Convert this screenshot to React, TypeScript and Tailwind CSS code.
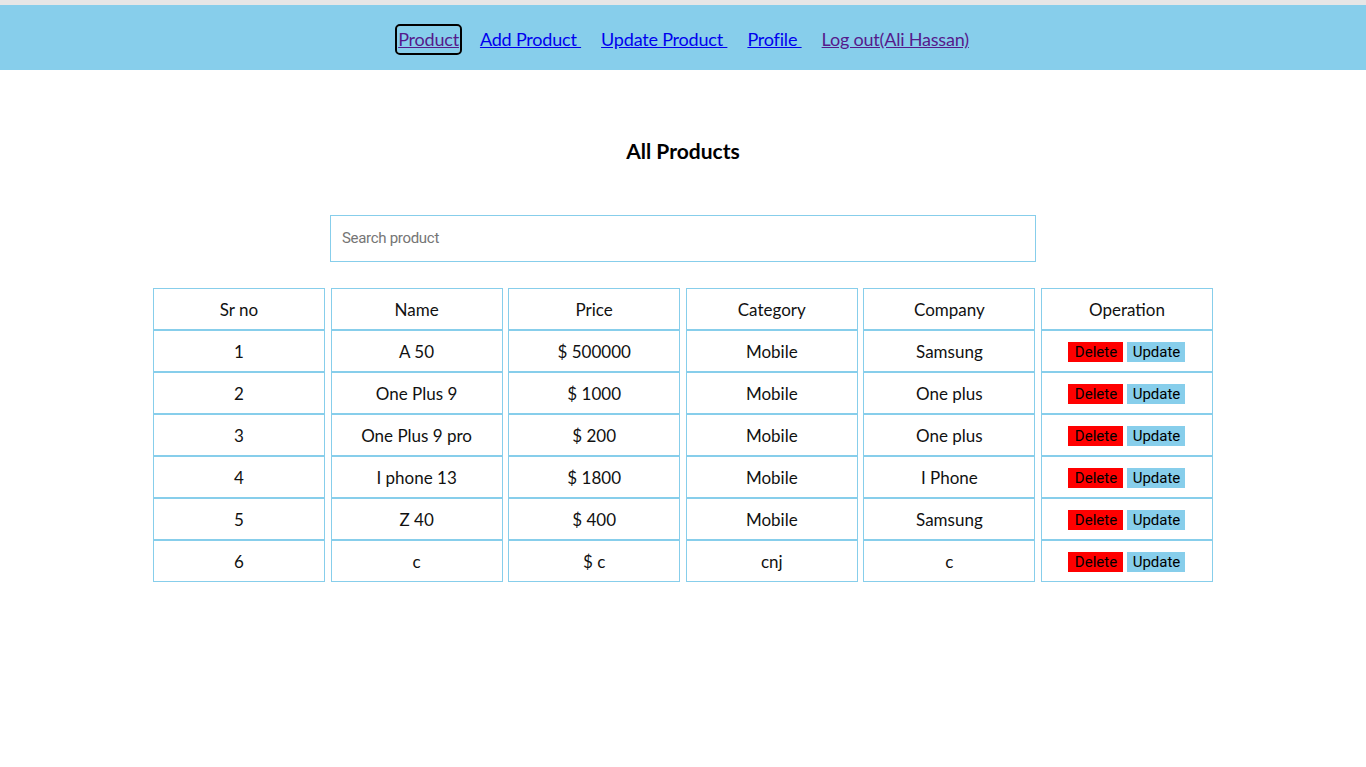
import React from "react";

const products = [
  { name: "A 50", price: "500000", category: "Mobile", company: "Samsung" },
  { name: "One Plus 9", price: "1000", category: "Mobile", company: "One plus" },
  { name: "One Plus 9 pro", price: "200", category: "Mobile", company: "One plus" },
  { name: "I phone 13", price: "1800", category: "Mobile", company: "I Phone" },
  { name: "Z 40", price: "400", category: "Mobile", company: "Samsung" },
  { name: "c", price: "c", category: "cnj", company: "c" },
];

const headers = ["Sr no", "Name", "Price", "Category", "Company", "Operation"];

function Cell({ children }: { children: React.ReactNode }) {
  return (
    <div className="h-[42px] border border-[#87ceeb] flex items-center justify-center pt-[2px] text-[17px] text-[#111]">
      {children}
    </div>
  );
}

export default function App() {
  return (
    <div className="min-h-screen bg-white font-['Lato',sans-serif]">
      <div className="h-[5px] bg-[#e6e6e6]" />
      <nav className="h-[65px] bg-[#87ceeb] flex items-center justify-center pt-[4px] text-[18px] tracking-[-0.2px]">
        <a
          href="#"
          className="text-[#551a8b] underline px-[1px] mr-[20px] rounded-[3px] outline-2 outline-black ring-1 ring-white"
        >
          Product
        </a>
        <a href="#" className="text-[#0000ee] underline mr-[20px]">Add Product&nbsp;</a>
        <a href="#" className="text-[#0000ee] underline mr-[20px]">Update Product&nbsp;</a>
        <a href="#" className="text-[#0000ee] underline mr-[20px]">Profile&nbsp;</a>
        <a href="#" className="text-[#551a8b] underline">Log out(Ali Hassan)</a>
      </nav>

      <h1 className="text-center font-bold text-[21px] text-black mt-[65px]">All Products</h1>

      <div className="flex justify-center mt-[48px]">
        <input
          type="text"
          placeholder="Search product"
          className="w-[706px] h-[47px] border border-[#87ceeb] px-[11px] text-[15px] tracking-[-0.3px] font-['Roboto',sans-serif] placeholder:text-[#757575] outline-none"
        />
      </div>

      <div className="w-[1060px] mx-auto mt-[26px] grid grid-cols-6 gap-x-[5.6px]">
        {headers.map((h) => (
          <Cell key={h}>{h}</Cell>
        ))}
        {products.map((p, i) => (
          <React.Fragment key={i}>
            <Cell>{i + 1}</Cell>
            <Cell>{p.name}</Cell>
            <Cell>$ {p.price}</Cell>
            <Cell>{p.category}</Cell>
            <Cell>{p.company}</Cell>
            <Cell>
              <div className="flex gap-[4px] font-['Roboto',sans-serif] text-[15px]">
                <button className="bg-[#ff0000] text-black w-[55px] h-[20px] leading-[20px]">Delete</button>
                <button className="bg-[#87ceeb] text-black w-[58px] h-[20px] leading-[20px]">Update</button>
              </div>
            </Cell>
          </React.Fragment>
        ))}
      </div>
    </div>
  );
}
